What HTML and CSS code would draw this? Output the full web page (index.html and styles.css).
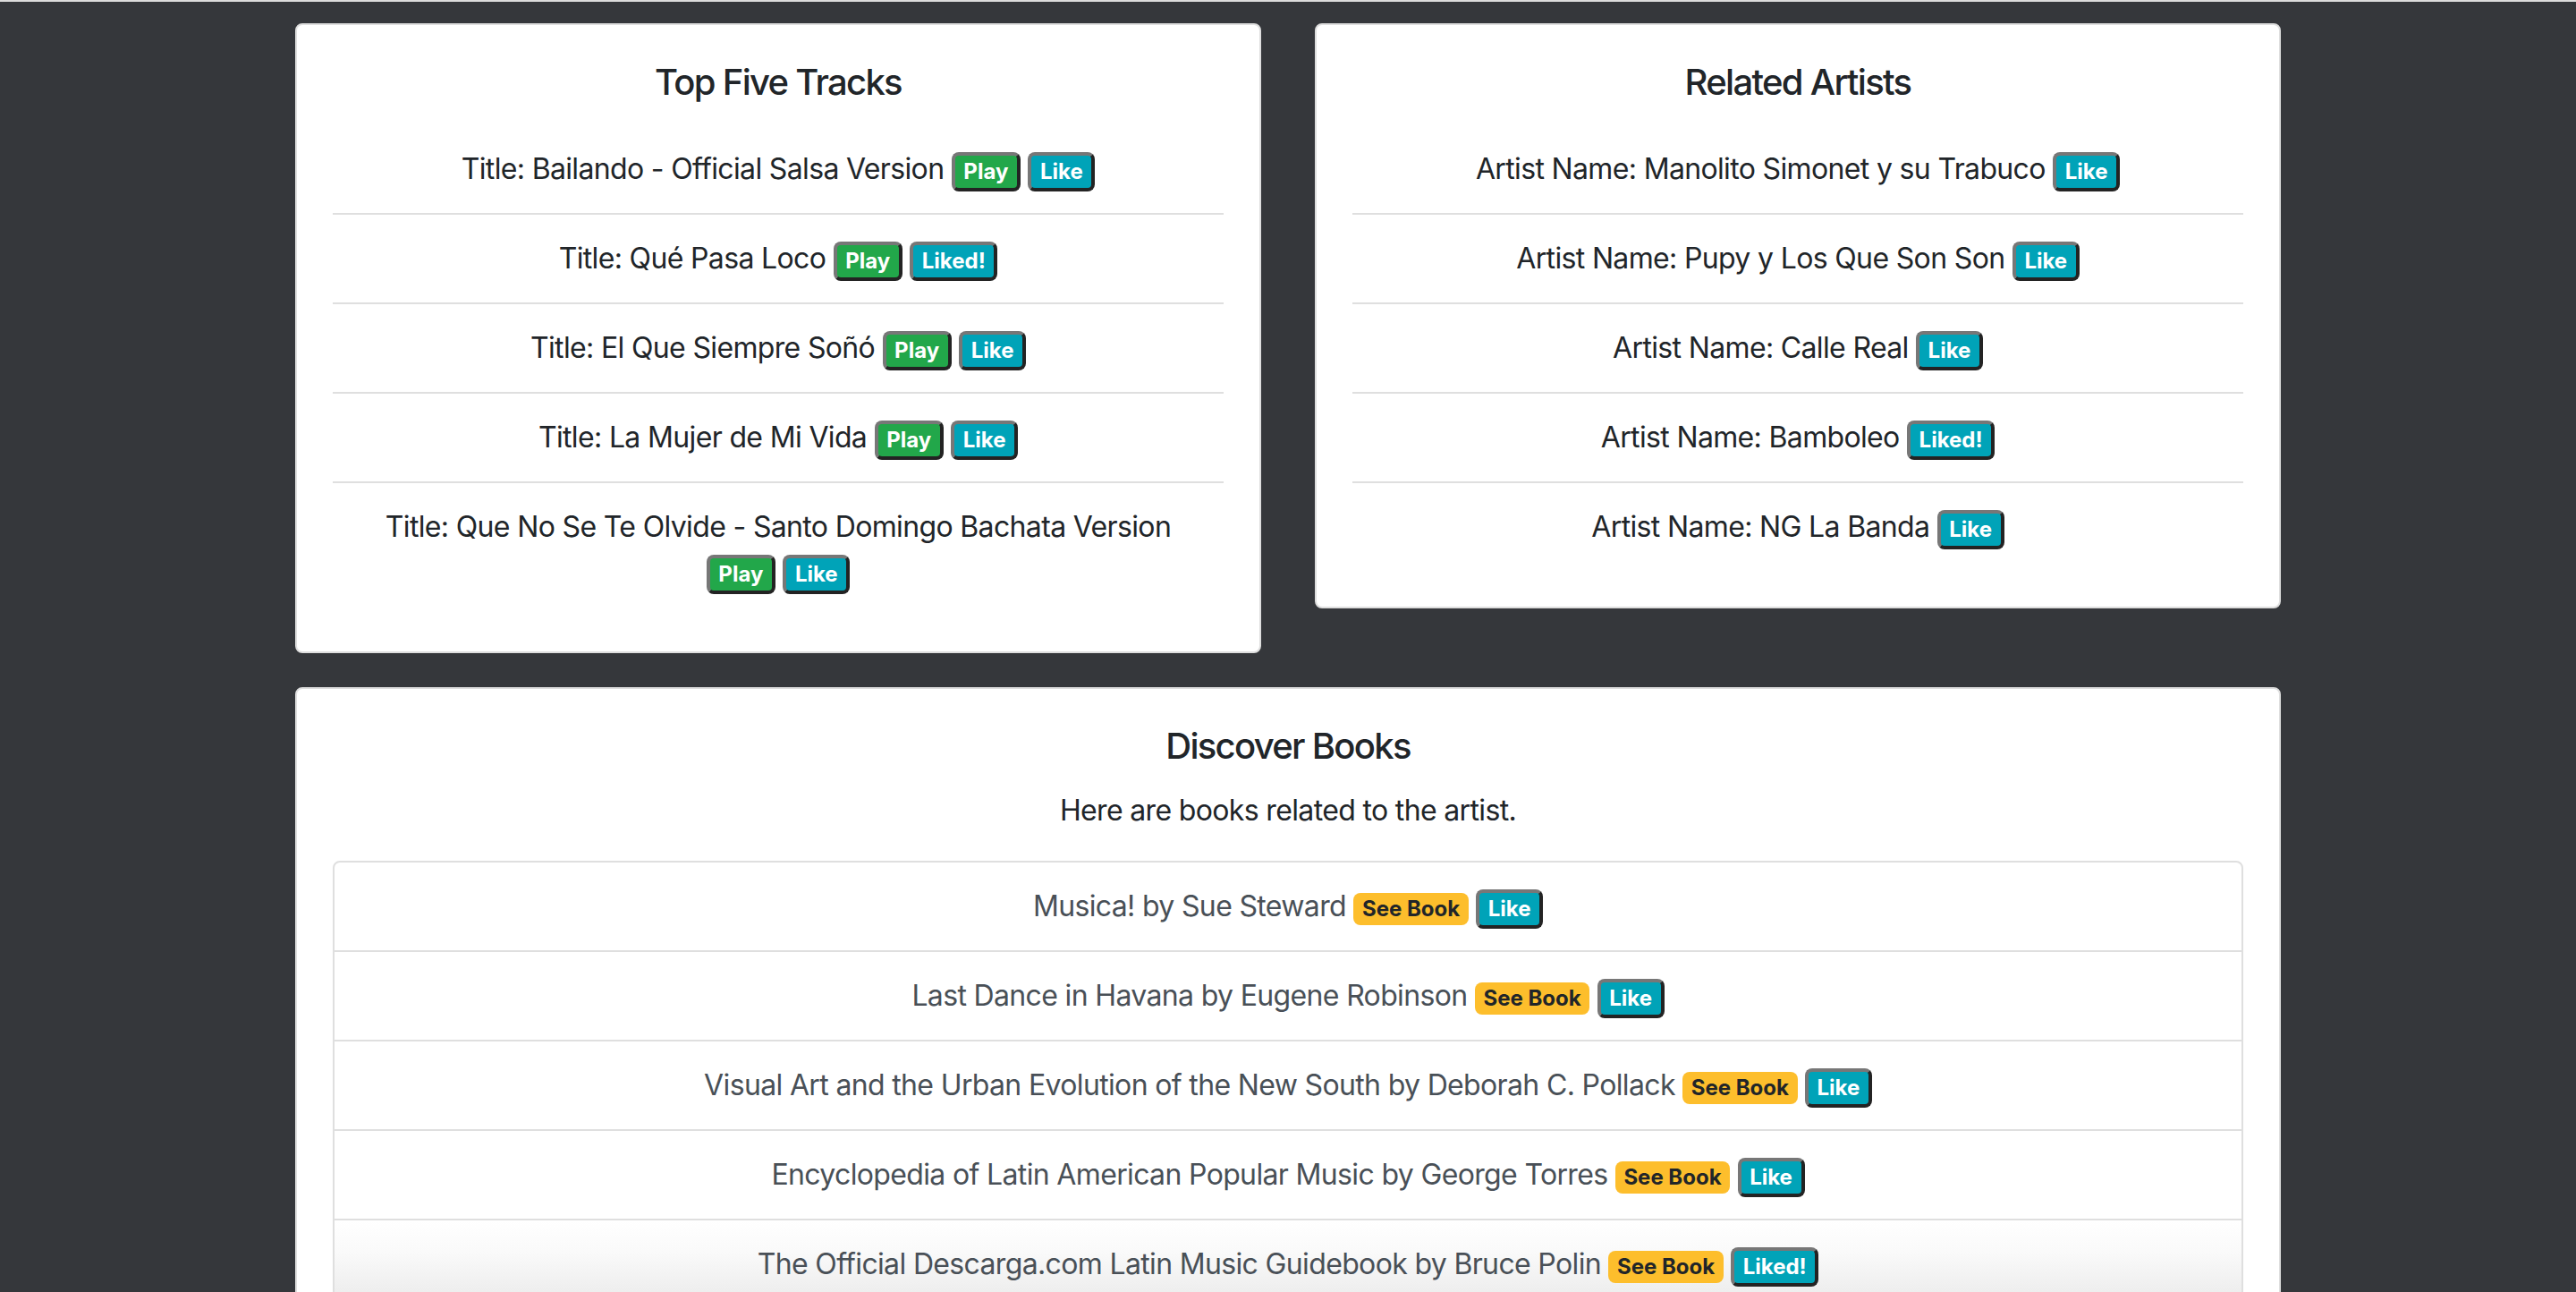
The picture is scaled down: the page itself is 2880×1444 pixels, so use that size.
FILE: index.html
```html
<!DOCTYPE html>
<html lang="en">
<head>
<meta charset="utf-8">
<title>Artist</title>
<link rel="stylesheet" href="styles.css">
</head>
<body>
<div class="page">
  <div class="container">
    <div class="row">
      <div class="col">
        <div class="card">
          <div class="card-body">
            <h5 class="card-title">Top Five Tracks</h5>
            <ul class="list-flush">
              <li class="item">Title: Bailando - Official Salsa Version <button class="badge btn-play">Play</button> <button class="badge btn-like">Like</button></li>
              <li class="item">Title: Qué Pasa Loco <button class="badge btn-play">Play</button> <button class="badge btn-like">Liked!</button></li>
              <li class="item">Title: El Que Siempre Soñó <button class="badge btn-play">Play</button> <button class="badge btn-like">Like</button></li>
              <li class="item">Title: La Mujer de Mi Vida <button class="badge btn-play">Play</button> <button class="badge btn-like">Like</button></li>
              <li class="item">Title: Que No Se Te Olvide - Santo Domingo Bachata Version <button class="badge btn-play">Play</button> <button class="badge btn-like">Like</button></li>
            </ul>
          </div>
        </div>
      </div>
      <div class="col">
        <div class="card">
          <div class="card-body">
            <h5 class="card-title">Related Artists</h5>
            <ul class="list-flush">
              <li class="item">Artist Name: Manolito Simonet y su Trabuco <button class="badge btn-like">Like</button></li>
              <li class="item">Artist Name: Pupy y Los Que Son Son <button class="badge btn-like">Like</button></li>
              <li class="item">Artist Name: Calle Real <button class="badge btn-like">Like</button></li>
              <li class="item">Artist Name: Bamboleo <button class="badge btn-like">Liked!</button></li>
              <li class="item">Artist Name: NG La Banda <button class="badge btn-like">Like</button></li>
            </ul>
          </div>
        </div>
      </div>
    </div>

    <div class="card books-card">
      <div class="card-body">
        <h5 class="card-title">Discover Books</h5>
        <p class="card-text">Here are books related to the artist.</p>
        <ul class="list-group">
          <li class="group-item">Musica! by Sue Steward <a class="badge badge-book" href="#">See Book</a> <button class="badge btn-like">Like</button></li>
          <li class="group-item">Last Dance in Havana by Eugene Robinson <a class="badge badge-book" href="#">See Book</a> <button class="badge btn-like">Like</button></li>
          <li class="group-item">Visual Art and the Urban Evolution of the New South by Deborah C. Pollack <a class="badge badge-book" href="#">See Book</a> <button class="badge btn-like">Like</button></li>
          <li class="group-item">Encyclopedia of Latin American Popular Music by George Torres <a class="badge badge-book" href="#">See Book</a> <button class="badge btn-like">Like</button></li>
          <li class="group-item group-item-hover">The Official Descarga.com Latin Music Guidebook by Bruce Polin <a class="badge badge-book" href="#">See Book</a> <button class="badge btn-like btn-focus">Liked!</button></li>
        </ul>
      </div>
    </div>
  </div>
</div>
</body>
</html>
```

FILE: styles.css
```css
html {
  overflow: hidden;
}

body {
  margin: 0;
  background: #35373b;
  border-top: 2px solid #dcdcdc;
  font-family: "Inter", "Roboto", sans-serif;
  font-size: 32px;
  line-height: 48px;
  letter-spacing: -0.65px;
  color: #212529;
}

.page {
  padding-top: 24px;
}

.container {
  width: 2280px;
  margin: 0 auto;
  padding: 0 30px;
  box-sizing: border-box;
}

.row {
  display: flex;
  align-items: flex-start;
  gap: 60px;
}

.col {
  flex: 1 1 0;
  min-width: 0;
}

.card {
  background: #fff;
  border: 2px solid #dedede;
  border-radius: 8px;
}

.card-body {
  padding: 40px;
}

.card-title {
  margin: 0 0 24px;
  font-size: 40px;
  font-weight: 500;
  line-height: 48px;
  letter-spacing: -1.7px;
  text-align: center;
}

.card-text {
  margin: 0 0 32px;
  text-align: center;
}

.list-flush {
  list-style: none;
  margin: 0;
  padding: 0;
}

.item {
  padding: 24px 40px;
  line-height: 50px;
  text-align: center;
  border-bottom: 2px solid #dfdfdf;
}

.item:last-child {
  border-bottom: 0;
}

.books-card {
  margin-top: 38px;
}

.list-group {
  list-style: none;
  margin: 0;
  padding: 0;
  border: 2px solid #dfdfdf;
  border-radius: 8px 8px 0 0;
}

.group-item {
  padding: 24px 40px;
  line-height: 50px;
  text-align: center;
  color: #495057;
  border-bottom: 2px solid #dfdfdf;
}

.group-item-hover {
  background: linear-gradient(#ffffff 0%, #fafafa 35%, #e9e9e9 100%);
}

.badge {
  display: inline-block;
  font-family: "Inter", "Roboto", sans-serif;
  font-size: 24px;
  font-weight: 700;
  line-height: 1;
  letter-spacing: 0;
  padding: 6px 9.6px;
  border-radius: 8px;
  vertical-align: baseline;
  text-decoration: none;
  margin: 0;
}

button.badge {
  border: 4px solid;
  border-color: #777777 #232323 #232323 #777777;
  color: #fff;
}

.btn-play {
  background: #22a74a;
}

.btn-like {
  background: #00a3b8;
}

.btn-focus {
  border-color: #0a5bd0;
}

.badge-book {
  background: #fdbe2c;
  color: #212529;
}
```
